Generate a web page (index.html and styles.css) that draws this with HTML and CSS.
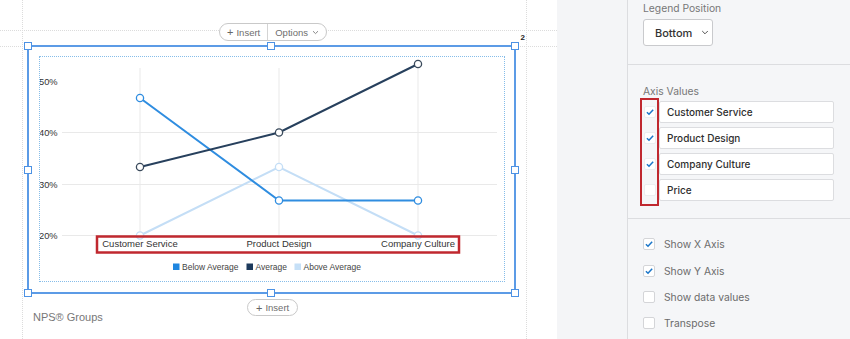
FILE: index.html
```html
<!DOCTYPE html>
<html>
<head>
<meta charset="utf-8">
<link rel="stylesheet" href="styles.css">
</head>
<body>
<div class="canvas">
  <div class="guide guide-v guide-v1"></div>
  <div class="guide guide-v guide-v2"></div>
  <div class="guide guide-h guide-h1"></div>
  <div class="guide guide-h guide-h2"></div>

  <div class="column">
    <div class="toolbar-row">
      <div class="pill">
        <span class="pill-part"><span class="plus">+</span> Insert</span>
        <span class="pill-sep"></span>
        <span class="pill-part">Options <svg class="chev" width="7" height="5" viewBox="0 0 7 5"><path d="M1 1.2 L3.5 3.6 L6 1.2" fill="none" stroke="#888" stroke-width="1"/></svg></span>
      </div>
    </div>

    <div class="selection">
      <span class="count">2</span>
      <span class="handle h-tl"></span><span class="handle h-tc"></span><span class="handle h-tr"></span>
      <span class="handle h-ml"></span><span class="handle h-mr"></span>
      <span class="handle h-bl"></span><span class="handle h-bc"></span><span class="handle h-br"></span>
      <div class="chart-box">
        <svg class="chart" width="464" height="224" viewBox="40 57 464 224">
          <g class="grid" stroke="#e9e9e9" stroke-width="1">
            <line x1="140" y1="68" x2="140" y2="236"/>
            <line x1="279" y1="68" x2="279" y2="236"/>
            <line x1="418" y1="68" x2="418" y2="236"/>
            <line x1="62" y1="132.5" x2="497" y2="132.5"/>
            <line x1="62" y1="184.5" x2="497" y2="184.5"/>
            <line x1="62" y1="235.5" x2="497" y2="235.5"/>
          </g>
          <g class="ylabels" font-family="Liberation Sans, Arial, sans-serif" font-size="9.3" fill="#333">
            <text x="39" y="84.5">50%</text>
            <text x="39" y="136">40%</text>
            <text x="39" y="187.5">30%</text>
            <text x="39" y="239">20%</text>
          </g>
          <polyline points="140,235.5 279,167 418,235.5" fill="none" stroke="#c4def6" stroke-width="2"/>
          <polyline points="140,98 279,200.5 418,200.5" fill="none" stroke="#2f8de0" stroke-width="2"/>
          <polyline points="140,167 279,132.5 418,64" fill="none" stroke="#27405d" stroke-width="2"/>
          <g fill="#fff" stroke-width="1.3">
            <circle cx="140" cy="235.5" r="3.6" stroke="#c4def6"/>
            <circle cx="279" cy="167" r="3.6" stroke="#c4def6"/>
            <circle cx="418" cy="235.5" r="3.6" stroke="#c4def6"/>
            <circle cx="140" cy="98" r="3.6" stroke="#2f8de0"/>
            <circle cx="279" cy="200.5" r="3.6" stroke="#2f8de0"/>
            <circle cx="418" cy="200.5" r="3.6" stroke="#2f8de0"/>
            <circle cx="140" cy="167" r="3.6" stroke="#3a4a5c"/>
            <circle cx="279" cy="132.5" r="3.6" stroke="#3a4a5c"/>
            <circle cx="418" cy="64" r="3.6" stroke="#3a4a5c"/>
          </g>
          <g class="xlabels" font-family="Liberation Sans, Arial, sans-serif" font-size="9.5" fill="#333" text-anchor="middle">
            <text x="140" y="247">Customer Service</text>
            <text x="279" y="247">Product Design</text>
            <text x="418" y="247">Company Culture</text>
          </g>
          <rect x="97" y="236.5" width="362" height="16" fill="none" stroke="#c0282f" stroke-width="2.5"/>
          <g class="legend" font-family="Liberation Sans, Arial, sans-serif" font-size="8.5" fill="#444">
            <rect x="173" y="263.5" width="6.5" height="6.5" fill="#1f86e0"/>
            <text x="182" y="270">Below Average</text>
            <rect x="246.5" y="263.5" width="6.5" height="6.5" fill="#1d3a5c"/>
            <text x="255.5" y="270">Average</text>
            <rect x="294.5" y="263.5" width="6.5" height="6.5" fill="#c6e0f7"/>
            <text x="303.5" y="270">Above Average</text>
          </g>
        </svg>
      </div>
    </div>

    <div class="nps">NPS® Groups</div>
  </div>

  <div class="pill pill-bottom">
    <span class="pill-part"><span class="plus">+</span> Insert</span>
  </div>
</div>

<div class="panel">
  <div class="strip"></div>
  <div class="panel-body">
    <div class="section sec-legend">
      <div class="label">Legend Position</div>
      <div class="select">Bottom <svg class="sel-chev" width="8" height="5" viewBox="0 0 8 5"><path d="M1.2 1 L4 3.8 L6.8 1" fill="none" stroke="#555" stroke-width="1"/></svg></div>
    </div>
    <div class="section sec-axis">
      <div class="label">Axis Values</div>
      <div class="axis-rows">
        <div class="red-box"></div>
        <div class="axis-row">
          <span class="cb plain checked"><svg width="12" height="12" viewBox="0 0 12 12"><path d="M2.3 6.3 L4.8 8.7 L9.8 3.2" fill="none" stroke="#1b76c9" stroke-width="1.8"/></svg></span>
          <div class="input">Customer Service</div>
        </div>
        <div class="axis-row">
          <span class="cb plain checked"><svg width="12" height="12" viewBox="0 0 12 12"><path d="M2.3 6.3 L4.8 8.7 L9.8 3.2" fill="none" stroke="#1b76c9" stroke-width="1.8"/></svg></span>
          <div class="input">Product Design</div>
        </div>
        <div class="axis-row">
          <span class="cb plain checked"><svg width="12" height="12" viewBox="0 0 12 12"><path d="M2.3 6.3 L4.8 8.7 L9.8 3.2" fill="none" stroke="#1b76c9" stroke-width="1.8"/></svg></span>
          <div class="input">Company Culture</div>
        </div>
        <div class="axis-row">
          <span class="cb plain"></span>
          <div class="input">Price</div>
        </div>
      </div>
    </div>
    <div class="section sec-opts">
      <div class="opt"><span class="cb checked"><svg width="12" height="12" viewBox="0 0 12 12"><path d="M2.3 6.3 L4.8 8.7 L9.8 3.2" fill="none" stroke="#1b76c9" stroke-width="1.8"/></svg></span><span>Show X Axis</span></div>
      <div class="opt"><span class="cb checked"><svg width="12" height="12" viewBox="0 0 12 12"><path d="M2.3 6.3 L4.8 8.7 L9.8 3.2" fill="none" stroke="#1b76c9" stroke-width="1.8"/></svg></span><span>Show Y Axis</span></div>
      <div class="opt"><span class="cb"></span><span>Show data values</span></div>
      <div class="opt"><span class="cb"></span><span>Transpose</span></div>
    </div>
  </div>
</div>
</body>
</html>
```

FILE: styles.css
```css
* { box-sizing: border-box; }
html, body { margin: 0; padding: 0; }
body {
  width: 850px;
  height: 339px;
  overflow: hidden;
  display: flex;
  background: #fff;
  font-family: "Liberation Sans", Arial, sans-serif;
}

.canvas {
  position: relative;
  width: 557px;
  height: 339px;
  background: #fff;
  flex: none;
}

.guide { position: absolute; }
.guide-v { top: 0; bottom: 0; width: 0; border-left: 1px dotted #dcdcdc; }
.guide-v1 { left: 22px; }
.guide-v2 { left: 526px; }
.guide-h { left: 0; right: 0; height: 0; border-top: 1px dotted #dcdcdc; }
.guide-h1 { top: 30px; }
.guide-h2 { top: 46px; }

.column {
  position: relative;
  margin-left: 27px;
  width: 489px;
  display: flex;
  flex-direction: column;
}

.toolbar-row {
  display: flex;
  justify-content: center;
  padding-top: 23px;
  padding-left: 3px;
}

.pill {
  display: flex;
  align-items: center;
  height: 18px;
  border: 1px solid #c9c9c9;
  border-radius: 9px;
  background: #fff;
  font-size: 9.5px;
  color: #6e6e6e;
}
.pill-part {
  display: flex;
  align-items: center;
  padding: 0 7px;
  white-space: nowrap;
}
.plus { font-size: 11px; margin-right: 3px; color: #666; }
.pill-sep { width: 1px; align-self: stretch; background: #d4d4d4; }
.chev { margin-left: 4px; margin-top: 1px; }

.pill-bottom {
  position: absolute;
  left: 247px;
  top: 299px;
  height: 17px;
  padding: 0 1px;
}

.selection {
  position: relative;
  margin-top: 4px;
  height: 249px;
  border: 2px solid #5c9be6;
  padding: 9px 9px 10px 10px;
}

.count {
  position: absolute;
  right: -11px;
  top: -14px;
  font-size: 8px;
  font-weight: bold;
  color: #222;
}

.handle {
  position: absolute;
  width: 8px;
  height: 8px;
  background: #fff;
  border: 1.5px solid #4d92e4;
}
.h-tl { left: -5px; top: -5px; }
.h-tc { left: 238px; top: -5px; }
.h-tr { right: -5px; top: -5px; }
.h-ml { left: -5px; top: 119px; }
.h-mr { right: -5px; top: 119px; }
.h-bl { left: -5px; bottom: -5px; }
.h-bc { left: 238px; bottom: -5px; }
.h-br { right: -5px; bottom: -5px; }

.chart-box {
  width: 466px;
  height: 226px;
  border: 1px dotted #86bde9;
}
.chart { display: block; }

.nps {
  margin-top: 17px;
  margin-left: 6px;
  font-size: 11px;
  color: #777;
}

/* right panel */
.panel {
  flex: 1;
  display: flex;
  background: #f5f6f8;
  box-shadow: -2px 0 5px rgba(0, 0, 0, 0.07);
  font-family: Inter, "Liberation Sans", sans-serif;
}
.strip {
  width: 71px;
  flex: none;
  background: #f4f5f7;
  border-right: 1px solid #dcdde0;
}
.panel-body {
  flex: 1;
  display: flex;
  flex-direction: column;
}
.section {
  border-bottom: 1px solid #dcdde0;
  padding-left: 15px;
}
.label {
  font-size: 10.3px;
  color: #777;
  line-height: 14px;
}
.sec-legend {
  height: 65px;
  padding-top: 1px;
}
.select {
  margin-top: 4px;
  width: 70px;
  height: 27px;
  background: #fff;
  border: 1px solid #c9cacd;
  border-radius: 3px;
  display: flex;
  align-items: center;
  padding-left: 11px;
  font-size: 11px;
  font-weight: 500;
  color: #333;
}
.sel-chev { margin-left: 9px; }

.sec-axis {
  height: 154px;
  padding-top: 19px;
}
.axis-rows {
  position: relative;
  margin-top: 3px;
  display: flex;
  flex-direction: column;
  gap: 4px;
  padding-left: 1px;
}
.axis-row {
  display: flex;
  align-items: center;
  height: 22px;
}
.input {
  margin-left: 3px;
  width: 175px;
  height: 22px;
  background: #fff;
  border: 1px solid #dcdde0;
  border-radius: 2px;
  display: flex;
  align-items: center;
  padding-left: 7px;
  font-size: 10px;
  font-weight: 500;
  color: #2e2e2e;
}
.red-box {
  position: absolute;
  left: -3px;
  top: -3px;
  width: 19px;
  height: 108px;
  border: 2.5px solid #c0282f;
}

.cb {
  width: 12px;
  height: 12px;
  flex: none;
  background: #fff;
  border: 1px solid #d4d5d8;
  border-radius: 2px;
  display: flex;
  align-items: center;
  justify-content: center;
}
.cb svg { display: block; }
.cb.plain { border-color: #eceef0; }

.sec-opts {
  border-bottom: none;
  padding-top: 19px;
  display: flex;
  flex-direction: column;
  gap: 14px;
}
.opt {
  display: flex;
  align-items: center;
  height: 12.4px;
  font-size: 10.3px;
  color: #6b6b6b;
}
.opt .cb { margin-right: 9px; }
```
